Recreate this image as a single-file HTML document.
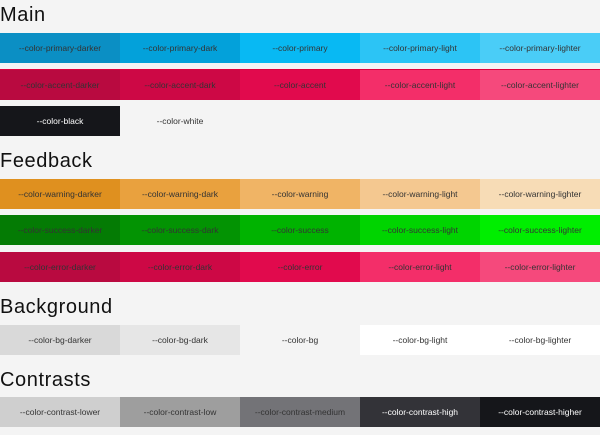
<html><head><style>
body{margin:0;background:#f4f4f4;font-family:"Liberation Sans",sans-serif;width:600px;height:435px;overflow:hidden;position:relative}
h2{position:absolute;left:0;margin:0;font-weight:400;font-size:20px;letter-spacing:0.6px;color:#111}
.r{position:absolute;left:0;display:flex;height:30px}
.r div{width:120px;height:30px;line-height:30px;text-align:center;font-size:8.5px;color:#333}
</style></head><body>
<h2 style="top:4px">Main</h2>
<div class="r" style="top:33px"><div style="background:#0b8fc4">--color-primary-darker</div><div style="background:#03a1da">--color-primary-dark</div><div style="background:#08b9f3">--color-primary</div><div style="background:#2cc4f5">--color-primary-light</div><div style="background:#4acdf7">--color-primary-lighter</div></div>
<div class="r" style="top:69px;border-top:1px solid #e0003c"><div style="background:#b90a40">--color-accent-darker</div><div style="background:#cd0845">--color-accent-dark</div><div style="background:#e10a4d">--color-accent</div><div style="background:#f32e69">--color-accent-light</div><div style="background:#f5497c">--color-accent-lighter</div></div>
<div class="r" style="top:106px"><div style="background:#15161a;color:#fff">--color-black</div><div>--color-white</div></div>
<h2 style="top:150px">Feedback</h2>
<div class="r" style="top:179px"><div style="background:#df901f">--color-warning-darker</div><div style="background:#e9a13e">--color-warning-dark</div><div style="background:#f0b465">--color-warning</div><div style="background:#f4c890">--color-warning-light</div><div style="background:#f7dcb6">--color-warning-lighter</div></div>
<div class="r" style="top:215px"><div style="background:#047b04">--color-success-darker</div><div style="background:#039303">--color-success-dark</div><div style="background:#00b300">--color-success</div><div style="background:#00d400">--color-success-light</div><div style="background:#00ee00">--color-success-lighter</div></div>
<div class="r" style="top:252px"><div style="background:#b90a40">--color-error-darker</div><div style="background:#cd0845">--color-error-dark</div><div style="background:#e10a4d">--color-error</div><div style="background:#f32e69">--color-error-light</div><div style="background:#f5497c">--color-error-lighter</div></div>
<h2 style="top:296px">Background</h2>
<div class="r" style="top:325px"><div style="background:#d9d9d9">--color-bg-darker</div><div style="background:#e6e6e6">--color-bg-dark</div><div style="background:#f4f4f4">--color-bg</div><div style="background:#fff">--color-bg-light</div><div style="background:#fff">--color-bg-lighter</div></div>
<h2 style="top:369px">Contrasts</h2>
<div class="r" style="top:397px"><div style="background:#cfcfcf">--color-contrast-lower</div><div style="background:#9e9e9e">--color-contrast-low</div><div style="background:#737377">--color-contrast-medium</div><div style="background:#333338;color:#fff">--color-contrast-high</div><div style="background:#15161a;color:#fff">--color-contrast-higher</div></div>
</body></html>
